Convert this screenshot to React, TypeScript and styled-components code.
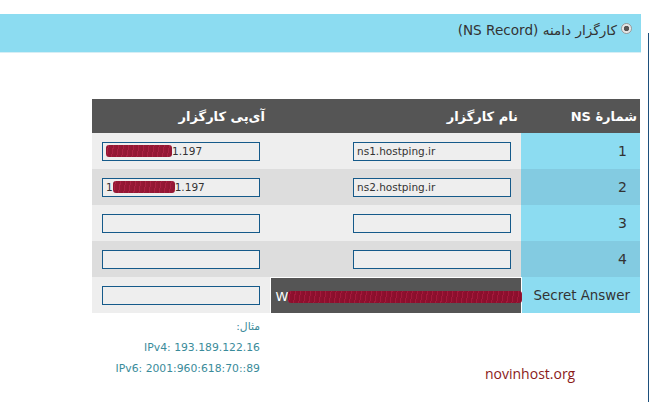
import React from 'react';
import styled, {createGlobalStyle} from 'styled-components';

const GlobalStyle = createGlobalStyle`
    html, body {
        margin: 0;
        padding: 0;
        background: #ffffff;
        font-family: "DejaVu Sans", "Noto Sans", sans-serif;
    }
`

type NsRow = {
    num: string
    name: string
    ip: React.ReactNode
}

// پوشاندن متن با ماژیک قرمز
const Scribble = styled.span<{ $w: number }>`
    display: inline-block;
    width: ${props => props.$w}px;
    height: 12px;
    vertical-align: -2px;
    background: repeating-linear-gradient(100deg, #8e0c2a 0 2px, #a8163a 2px 3px, #920d2d 3px 5px);
    border-radius: 3px;
    filter: blur(0.6px);
    opacity: 0.95;
`

const rows: NsRow[] = [
    {num: '1', name: 'ns1.hostping.ir', ip: <><Scribble $w={66}/>1.197</>},
    {num: '2', name: 'ns2.hostping.ir', ip: <>1<Scribble $w={62}/>1.197</>},
    {num: '3', name: '', ip: ''},
    {num: '4', name: '', ip: ''},
]

export default function App() {
    return (
        <>
            <GlobalStyle/>
            <Page>
                <Main>
                    <HeaderBar>
                        <Radio/>
                        <HeaderTitle>کارگزار دامنه (NS Record)</HeaderTitle>
                    </HeaderBar>

                    <Table>
                        <colgroup>
                            <col style={{width: 119}}/>
                            <col style={{width: 251}}/>
                            <col style={{width: 178}}/>
                        </colgroup>
                        <thead>
                        <tr>
                            <HeadCell>شمارهٔ NS</HeadCell>
                            <HeadCell>نام کارگزار</HeadCell>
                            <HeadCell $pad={5}>آی‌پی کارگزار</HeadCell>
                        </tr>
                        </thead>
                        <tbody>
                        {rows.map((r, i) => (
                            <Row key={r.num} $even={i % 2 === 1}>
                                <NumCell $even={i % 2 === 1}>{r.num}</NumCell>
                                <Cell><Field>{r.name}</Field></Cell>
                                <Cell><Field>{r.ip}</Field></Cell>
                            </Row>
                        ))}
                        <Row $even={false}>
                            <NumCell $even={false} $small>Secret Answer</NumCell>
                            <SecretCell>
                                <SecretText>W<Scribble $w={234}/></SecretText>
                            </SecretCell>
                            <Cell><Field/></Cell>
                        </Row>
                        </tbody>
                    </Table>

                    <Footer>
                        <Examples>
                            <ExampleLine>مثال:</ExampleLine>
                            <ExampleLine dir="ltr">IPv4: 193.189.122.16</ExampleLine>
                            <ExampleLine dir="ltr">IPv6: 2001:960:618:70::89</ExampleLine>
                        </Examples>
                        <Watermark>novinhost.org</Watermark>
                    </Footer>
                </Main>
                <SideRule/>
            </Page>
        </>
    );
}

const Page = styled.div`
    display: flex;
    width: 658px;
    height: 402px;
    overflow: hidden;
`

const Main = styled.div`
    width: 641px;
    padding-top: 14px;
    display: flex;
    flex-direction: column;
`

const SideRule = styled.div`
    width: 1px;
    margin-left: 7px;
    margin-top: 33px;
    height: 369px;
    background: #1d4f7c;
`

const HeaderBar = styled.div`
    direction: rtl;
    height: 32px;
    padding-bottom: 6px;
    background: #8cdcf1;
    border-bottom: 1px solid #d6eef5;
    display: flex;
    align-items: center;
    gap: 4px;
    padding-right: 9px;
`

const Radio = styled.span`
    width: 11px;
    height: 11px;
    border-radius: 50%;
    box-sizing: border-box;
    border: 1px solid #9a9a9a;
    background: radial-gradient(circle, #555 0 2.4px, #e2e2e2 3px, #f7f7f7 100%);
    margin-top: -4px;
`

const HeaderTitle = styled.span`
    font-size: 13.6px;
    color: #333333;
`

const Table = styled.table`
    direction: rtl;
    margin-top: 46px;
    margin-left: 92px;
    width: 548px;
    border-collapse: collapse;
    table-layout: fixed;
`

const HeadCell = styled.th<{ $pad?: number }>`
    height: 34px;
    box-sizing: border-box;
    padding: 0 ${props => props.$pad ?? 3}px 0 0;
    background: #555555;
    color: #ffffff;
    font-size: 13px;
    font-weight: bold;
    text-align: right;
`

const Row = styled.tr<{ $even: boolean }>`
    height: 36px;
    background: ${props => props.$even ? '#dddddd' : '#eeeeee'};
`

const NumCell = styled.td<{ $even: boolean, $small?: boolean }>`
    background: ${props => props.$even ? '#83cbe1' : '#8cdcf1'};
    color: #333333;
    font-size: ${props => props.$small ? '13.4px' : '14px'};
    text-align: right;
    padding: 0 ${props => props.$small ? 10 : 13}px 0 0;
`

const Cell = styled.td`
    padding: 0 10px 0 0;
    text-align: right;
`

const Field = styled.div`
    direction: ltr;
    display: inline-block;
    vertical-align: middle;
    width: 158px;
    height: 19px;
    box-sizing: border-box;
    border: 1px solid #155a8a;
    background: #eeeeee;
    font-size: 10.5px;
    line-height: 16px;
    color: #333333;
    text-align: left;
    padding-left: 3px;
    white-space: nowrap;
    overflow: hidden;
`

const SecretCell = styled.td`
    background: #555555;
    border-top: 1px solid #ffffff;
    border-left: 1px solid #ffffff;
    border-right: 1px solid #ffffff;
    padding: 0;
    direction: ltr;
    text-align: left;
`

const SecretText = styled.span`
    color: #ffffff;
    font-size: 13px;
    padding-left: 5px;
    white-space: nowrap;
`

const Footer = styled.div`
    display: flex;
    align-items: flex-start;
    margin-top: 3px;
`

const Examples = styled.div`
    margin-left: 92px;
    width: 168px;
    padding-right: 10px;
    direction: rtl;
    text-align: right;
`

const ExampleLine = styled.div`
    font-size: 10.8px;
    line-height: 21px;
    color: #3a8b9a;
    text-align: right;
`

const Watermark = styled.div`
    margin-left: 215px;
    margin-top: 48px;
    font-family: "Open Sans", sans-serif;
    font-size: 14px;
    line-height: 20px;
    color: #8b1a1a;
`
